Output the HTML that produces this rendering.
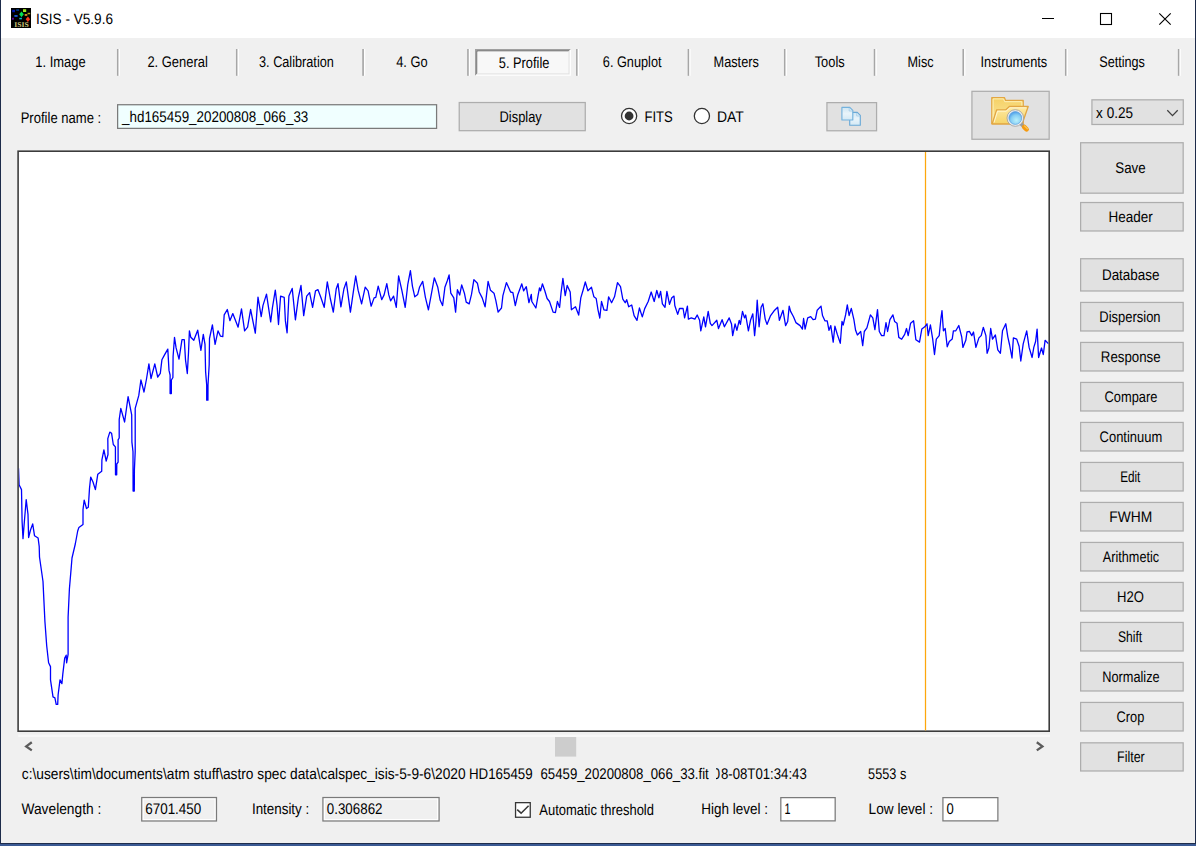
<!DOCTYPE html>
<html lang="en"><head><meta charset="utf-8"><title>ISIS - V5.9.6</title>
<style>
html,body{margin:0;padding:0;background:#f0f0f0;}
body{width:1196px;height:846px;overflow:hidden;font-family:"Liberation Sans", sans-serif;}
svg{display:block;position:absolute;left:0;top:0;}
svg text{font-family:"Liberation Sans", sans-serif;white-space:pre;text-rendering:geometricPrecision;}
</style></head>
<body>
<svg width="1196" height="846" viewBox="0 0 1196 846">
<defs>
<clipPath id="pclip"><rect x="18.9" y="152" width="1029.5" height="578.4"/></clipPath>
<clipPath id="dclip"><rect x="716.1" y="760" width="100" height="30"/></clipPath>
</defs>
<rect x="0" y="0" width="1196" height="846" fill="#f0f0f0"/>
<rect x="0" y="0" width="1196" height="38" fill="#fff"/>
<rect x="0" y="0" width="1" height="846" fill="#1d2b4a"/>
<rect x="1195" y="0" width="1" height="846" fill="#1d2b4a"/>
<rect x="0" y="843" width="1196" height="1" fill="#1f2d4c"/>
<rect x="0" y="844" width="1196" height="2" fill="#3b5a94"/>
<g transform="translate(11 8)"><rect width="20" height="20" fill="#000"/><rect x="1.2" y="1.8" width="2.8" height="2.4" fill="#0018b0"/><rect x="5.2" y="1.3" width="2.8" height="1.6" fill="#003a8a"/><rect x="12" y="1.2" width="3.2" height="2.8" fill="#9be81e"/><path d="M10.5 3.4 L12.8 6.3 L10.5 9.2 L8.2 6.3 Z" fill="#00e050"/><rect x="16.6" y="4.8" width="2.6" height="1.5" fill="#b0a818"/><rect x="13.7" y="6" width="2.6" height="1.9" fill="#d08820"/><rect x="3.4" y="7" width="3.2" height="1.9" fill="#1858d0"/><rect x="1" y="9.8" width="1.9" height="1.9" fill="#6000a0"/><rect x="8.3" y="9.8" width="2.6" height="1.5" fill="#00b8d0"/><path d="M16.9 8.6 L19.1 11.2 L16.9 14 L14.7 11.2 Z" fill="#f83818"/><text x="10.6" y="18.9" style="font-family:'Liberation Serif',serif" font-size="7.4" font-weight="bold" fill="#cfc87c" text-anchor="middle" textLength="14.5" lengthAdjust="spacingAndGlyphs">ISIS</text></g>
<path d="M1042 18.5 H1054" stroke="#000" stroke-width="1.05" fill="none"/>
<rect x="1100.5" y="13.5" width="11" height="11" stroke="#000" stroke-width="1.1" fill="none"/>
<path d="M1159.3 13.3 L1170.7 24.7 M1170.7 13.3 L1159.3 24.7" stroke="#000" stroke-width="1.15" fill="none"/>
<rect x="116.95" y="49" width="1.7" height="26.8" fill="#a6a6a6"/>
<rect x="118.65" y="49" width="1.25" height="26.8" fill="#fff"/>
<rect x="235.95" y="49" width="1.7" height="26.8" fill="#a6a6a6"/>
<rect x="237.65" y="49" width="1.25" height="26.8" fill="#fff"/>
<rect x="362.25" y="49" width="1.7" height="26.8" fill="#a6a6a6"/>
<rect x="363.95" y="49" width="1.25" height="26.8" fill="#fff"/>
<rect x="467.15" y="49" width="1.7" height="26.8" fill="#a6a6a6"/>
<rect x="468.85" y="49" width="1.25" height="26.8" fill="#fff"/>
<rect x="576.05" y="49" width="1.7" height="26.8" fill="#a6a6a6"/>
<rect x="577.75" y="49" width="1.25" height="26.8" fill="#fff"/>
<rect x="687.65" y="49" width="1.7" height="26.8" fill="#a6a6a6"/>
<rect x="689.35" y="49" width="1.25" height="26.8" fill="#fff"/>
<rect x="783.95" y="49" width="1.7" height="26.8" fill="#a6a6a6"/>
<rect x="785.65" y="49" width="1.25" height="26.8" fill="#fff"/>
<rect x="873.75" y="49" width="1.7" height="26.8" fill="#a6a6a6"/>
<rect x="875.45" y="49" width="1.25" height="26.8" fill="#fff"/>
<rect x="962.45" y="49" width="1.7" height="26.8" fill="#a6a6a6"/>
<rect x="964.15" y="49" width="1.25" height="26.8" fill="#fff"/>
<rect x="1064.95" y="49" width="1.7" height="26.8" fill="#a6a6a6"/>
<rect x="1066.65" y="49" width="1.25" height="26.8" fill="#fff"/>
<rect x="1177.85" y="49" width="1.7" height="26.8" fill="#a6a6a6"/>
<rect x="1179.55" y="49" width="1.25" height="26.8" fill="#fff"/>
<rect x="475" y="49.1" width="95.9" height="26.6" fill="#fff"/>
<path d="M475 49.1 H570.9 L569.65 50.35 H476.25 V74.45 L475 75.7 Z" fill="#a0a0a0"/>
<path d="M476.25 50.35 H569.65 L568.4 51.6 H477.5 V73.2 L476.25 74.45 Z" fill="#6b6b6b"/>
<rect x="477.5" y="51.6" width="90.9" height="21.6" fill="#f8f8f8"/>
<path d="M477.5 73.2 H568.4 V51.6 L569.65 50.35 V74.45 H476.25 Z" fill="#e3e3e3"/>
<rect x="117" y="104.1" width="320.20" height="24.90" fill="#7a7a7a"/><rect x="118.25" y="105.35" width="317.70" height="22.40" fill="#f0ffff"/>
<rect x="458.6" y="101.9" width="127.30" height="29.40" fill="#adadad"/><rect x="459.85" y="103.15" width="124.80" height="26.90" fill="#e1e1e1"/>
<circle cx="629.1" cy="116" r="7.6" fill="#fff" stroke="#333" stroke-width="1.3"/>
<circle cx="629.1" cy="116" r="4.4" fill="#333"/>
<circle cx="701.9" cy="116" r="7.6" fill="#fff" stroke="#333" stroke-width="1.3"/>
<rect x="826.3" y="102" width="50.90" height="29.40" fill="#adadad"/><rect x="827.55" y="103.25" width="48.40" height="26.90" fill="#e1e1e1"/>
<g>
<defs><linearGradient id="pg" x1="0" y1="0" x2="0" y2="1"><stop offset="0" stop-color="#cfe6f3"/><stop offset="0.5" stop-color="#e9f4fa"/><stop offset="1" stop-color="#d3e9f5"/></linearGradient></defs>
<path d="M849.7 112.4 H857.3 L860.3 115.4 V125.2 H849.7 Z" fill="url(#pg)" stroke="#6aa9d6" stroke-width="1.15" stroke-linejoin="round"/>
<path d="M856.7 112.9 V116 H859.9" fill="none" stroke="#a4cde9" stroke-width="0.8"/>
<path d="M841.9 107.4 H849.8 L852.8 110.4 V120 H841.9 Z" fill="url(#pg)" stroke="#74b2dd" stroke-width="1.15" stroke-linejoin="round"/>
<path d="M849.2 107.9 V111 H852.4" fill="none" stroke="#a4cde9" stroke-width="0.8"/>
</g>
<rect x="971.3" y="90.7" width="78.50" height="49.20" fill="#adadad"/><rect x="972.55" y="91.95" width="76.00" height="46.70" fill="#e1e1e1"/>
<g>
<defs>
<linearGradient id="fb" x1="0" y1="0" x2="0" y2="1"><stop offset="0" stop-color="#f5d064"/><stop offset="1" stop-color="#fbe8a0"/></linearGradient>
<linearGradient id="ff" x1="0" y1="0" x2="0" y2="1"><stop offset="0" stop-color="#fdeaa6"/><stop offset="1" stop-color="#f6d468"/></linearGradient>
<radialGradient id="lens" cx="0.58" cy="0.68" r="0.75"><stop offset="0" stop-color="#b9f0fb"/><stop offset="0.55" stop-color="#86cef4"/><stop offset="1" stop-color="#3c8ee6"/></radialGradient>
</defs>
<path d="M991.8 97.6 H1004.4 L1005.6 100.4 H1023.2 V123.8 H991.8 Z" fill="url(#fb)" stroke="#e2a643" stroke-width="1.3" stroke-linejoin="round"/>
<path d="M993.1 122.5 V98.9 H1003.5 L1004.7 101.7 H1021.9 V106" fill="none" stroke="#fdf0b8" stroke-width="1"/>
<path d="M992.2 123.8 L996.6 109.9 H1005.6 L1009.4 106.5 H1028.2 L1022.2 123.8 Z" fill="url(#ff)" stroke="#e2a643" stroke-width="1.3" stroke-linejoin="round"/>
<path d="M994 122.6 L997.6 111.2 H1006.1 L1009.9 107.8 H1026.4" fill="none" stroke="#fff6cf" stroke-width="1"/>
<path d="M1020.4 123.2 L1023.4 126.2" stroke="#9c9c9c" stroke-width="3.4" stroke-linecap="round"/>
<path d="M1024.2 127 L1026.6 129.4" stroke="#f59a0f" stroke-width="4.6" stroke-linecap="round"/>
<path d="M1024.6 126 L1027.4 128.8" stroke="#fbc14e" stroke-width="1.4" stroke-linecap="round"/>
<circle cx="1015.3" cy="118" r="8.3" fill="#ededed" stroke="#9d9d9d" stroke-width="0.8"/>
<circle cx="1015.3" cy="118" r="6.4" fill="url(#lens)" stroke="#5a9fe0" stroke-width="0.7"/>
</g>
<rect x="1091.3" y="99.2" width="92.60" height="25.90" fill="#adadad"/><rect x="1092.55" y="100.45" width="90.10" height="23.40" fill="#e1e1e1"/>
<path d="M1167.3 110.3 L1172.5 115.6 L1177.7 110.3" stroke="#404040" stroke-width="1.3" fill="none"/>
<rect x="1080" y="142.1" width="103.80" height="51.70" fill="#adadad"/><rect x="1081.25" y="143.35" width="101.30" height="49.20" fill="#e1e1e1"/>
<rect x="1080" y="201.9" width="103.80" height="29.70" fill="#adadad"/><rect x="1081.25" y="203.15" width="101.30" height="27.20" fill="#e1e1e1"/>
<rect x="1080" y="258.1" width="103.80" height="33.50" fill="#adadad"/><rect x="1081.25" y="259.35" width="101.30" height="31.00" fill="#e1e1e1"/>
<rect x="1080" y="301.8" width="103.80" height="29.80" fill="#adadad"/><rect x="1081.25" y="303.05" width="101.30" height="27.30" fill="#e1e1e1"/>
<rect x="1080" y="341.8" width="103.80" height="29.80" fill="#adadad"/><rect x="1081.25" y="343.05" width="101.30" height="27.30" fill="#e1e1e1"/>
<rect x="1080" y="381.8" width="103.80" height="29.80" fill="#adadad"/><rect x="1081.25" y="383.05" width="101.30" height="27.30" fill="#e1e1e1"/>
<rect x="1080" y="421.8" width="103.80" height="29.80" fill="#adadad"/><rect x="1081.25" y="423.05" width="101.30" height="27.30" fill="#e1e1e1"/>
<rect x="1080" y="461.8" width="103.80" height="29.80" fill="#adadad"/><rect x="1081.25" y="463.05" width="101.30" height="27.30" fill="#e1e1e1"/>
<rect x="1080" y="501.8" width="103.80" height="29.80" fill="#adadad"/><rect x="1081.25" y="503.05" width="101.30" height="27.30" fill="#e1e1e1"/>
<rect x="1080" y="541.8" width="103.80" height="29.80" fill="#adadad"/><rect x="1081.25" y="543.05" width="101.30" height="27.30" fill="#e1e1e1"/>
<rect x="1080" y="581.8" width="103.80" height="29.80" fill="#adadad"/><rect x="1081.25" y="583.05" width="101.30" height="27.30" fill="#e1e1e1"/>
<rect x="1080" y="621.8" width="103.80" height="29.80" fill="#adadad"/><rect x="1081.25" y="623.05" width="101.30" height="27.30" fill="#e1e1e1"/>
<rect x="1080" y="661.8" width="103.80" height="29.80" fill="#adadad"/><rect x="1081.25" y="663.05" width="101.30" height="27.30" fill="#e1e1e1"/>
<rect x="1080" y="701.8" width="103.80" height="29.80" fill="#adadad"/><rect x="1081.25" y="703.05" width="101.30" height="27.30" fill="#e1e1e1"/>
<rect x="1080" y="742.2" width="103.80" height="29.40" fill="#adadad"/><rect x="1081.25" y="743.45" width="101.30" height="26.90" fill="#e1e1e1"/>
<rect x="17.3" y="150.4" width="1032.7" height="581.6" fill="#3c3c3c"/>
<rect x="18.9" y="152" width="1029.5" height="578.4" fill="#fff"/>
<rect x="924.88" y="152" width="1.25" height="578.4" fill="#fda70c"/>
<polyline points="18.5,468.3 19.1,484.8 21.5,489.6 22.1,521.5 23.0,538.6 24.5,520 26.2,499.6 28,514.4 28.6,537.5 30.5,530 32.7,523.9 34.5,535.7 38.1,538 39.2,546.3 39.5,557 43,581.5 43.9,600.4 44.9,621.2 46.7,645.8 48.6,662.8 50.5,666.6 50.5,679.8 53,696.8 54.9,697.8 56.2,704.4 57.7,704.4 58.1,695 60,679.8 61.9,683.6 62.8,674.1 64.7,658.1 66.2,655.2 66.6,662.8 68.1,654.3 68.1,617.4 69.4,589 71,570.1 72,558 75.3,544 77.7,531 78.9,527.4 83,524.4 83,509.7 84.2,500.2 86.5,508.5 88.3,507.3 89.5,488.4 90.7,477.1 93,482 95.4,489.6 97.8,474.2 101.7,471.2 101.9,459.9 103.9,449.8 106.2,461 108,454.5 107.8,438.6 109.8,432.1 111.6,433.3 113.3,444.5 115.4,446.9 115.5,474.8 116.7,474.8 116.8,464 118.1,462.2 118.1,439.8 119.2,438 119.2,419.7 120.8,408.4 124.6,422 128.1,396.6 131.7,414.9 131.9,442.1 133.0,451.6 133.1,491 134.3,491 134.4,470 135.2,451.6 135.2,408.4 138.8,395.4 140.9,380 144,392 146.5,379 148.9,363.9 151,378.5 154.8,363.9 157.7,377 160.3,373.4 161.9,359.8 164.8,354.4 167.8,349.1 169,370.4 170.1,375 170.1,393.6 171.35,393.6 171.4,380 172.9,377.5 173.1,356.2 174.5,337.3 176.1,347.9 179,359.2 182,339.7 184.3,339.7 185.5,359.8 187.3,373.5 188.5,352.7 189.4,330.8 190.8,337.3 193.8,340.3 197.7,330.2 200.9,350.3 203.3,334.3 205,344.4 205.6,371.6 206.7,385 206.7,400.2 207.95,400.2 208,385 209.2,364.5 209.5,338.5 212.4,324.9 215.1,344.4 218,330.8 220.4,336.1 222.8,336.7 224.2,314.8 227.3,309.5 229.9,320.7 232.8,313.6 238.1,327.2 241.5,308.9 244.6,330.8 247.6,327.2 250.6,309.5 255.3,333.2 258,297.1 261.2,316.6 263,305.4 266.5,294.1 270.7,321.9 272.4,307.9 275.3,290.2 277.1,305.6 278.5,324.5 280.6,296.1 284.2,297.3 285.4,320.9 287.1,332.8 288.9,296.1 292.2,288.4 295.4,319.8 298.4,297.3 301,285.5 303.7,315.6 306.7,296.1 309.6,292.6 312.6,307.3 315.5,290.8 317.9,289.6 320.8,297.3 324.2,307.3 327.3,281.9 330.3,298.5 333.3,312.1 336.2,289 338,283.7 340.9,306.8 343.9,289 346.3,281.9 350.4,312.1 353.4,291.4 355.7,276 358.1,290.2 361.6,303.8 365.2,287.2 368.1,290.8 371.1,306.2 374.1,297.9 375.8,297.3 378.2,286.1 381.7,299.7 384.1,294.9 386.8,283.7 388.8,294.9 390.6,300.8 393.6,296.1 396.3,307.3 398.6,276 401.8,290.2 405.2,307.3 407.8,284.3 410.4,270.7 412.4,286.1 414.8,296.8 417.7,294.4 419.5,287.3 422.7,281.4 425.4,297.3 428.4,309.8 431.3,294.4 434.3,277.8 437.8,287.3 440.2,300.3 442.6,305.6 444.9,287.3 447.3,280.8 449.1,274.9 450.8,293.2 453.8,297.9 455.6,312.1 457.4,289.7 459.7,295 461.7,284.9 464.4,293.2 466.2,302.1 469.2,303.9 471.5,294.4 473.9,279.6 477.4,283.2 479.2,292 482.2,297.9 485.1,306.8 488.1,281.4 490.5,290.3 494,293.2 495.8,300.3 498.1,312.1 501.5,308 502.9,295.6 506.4,282.6 510.6,292 512.9,292.6 515.3,305.6 517.7,295 521.8,283.8 523.6,290.8 526.3,286.7 528.9,302.7 531.3,294.4 531.8,301.5 535.9,308 538.3,294.4 539.5,287.9 540.6,290.8 542.4,283.8 544.8,290.8 547.1,298.5 549.5,301.5 553.1,312.1 555.4,312.7 557.4,301.5 559.6,307.4 561,293.2 562.9,278.4 565.2,295.6 567.2,285.5 570.2,292 571.4,309.8 575.5,306.8 578.7,315.1 580.8,297.9 583.2,289.7 585.3,282 587.9,290.8 591.5,287.3 593.9,296.8 596.2,298.5 598,309.8 599.8,318 601.5,301.5 603.9,309.8 606.9,310.4 608.6,296.8 611.6,302.7 614.5,296.8 617.5,282.6 620.5,286.7 622.8,299.1 625.2,302.7 626.7,299.7 628.7,306.8 631.7,305 634.1,315.7 637,320.4 639.4,308 642.3,316.9 644.7,308.6 648.2,301.5 651.2,292 654.2,301.5 656.8,290.3 658.9,297.9 660.6,291.3 662.4,303.8 665,307.3 666.9,291.3 669.5,304.3 671.8,297.8 674,296.1 674.8,305.5 677.7,314.4 679.5,308.5 683.1,308.5 684.6,317.9 687.4,306.1 688.4,319.1 691.3,317.9 694.9,319.1 697.2,315 699.6,320.3 700.8,330.9 703.8,316.8 705.5,326.8 708.2,311.4 710.3,323.3 712,325.6 716.8,320.3 718.5,328.6 722.1,319.7 724.4,326.8 729.2,317.9 731.5,323.9 732.7,335.7 735.1,323.9 736.9,330.4 739.2,320.3 740.4,324.4 742.5,311.4 744.5,317.9 745.7,315 748.4,330.9 750.5,320.3 752.8,313.8 754.6,335.7 756,321.5 757.2,300.2 759.1,326.8 761.1,307.3 762.9,303.8 765.2,319.1 767,324.4 770.6,315.6 774.1,310.8 777.7,307.3 779.4,320.3 783,310.3 785.6,325.6 787.7,321.5 789.2,306.1 790.6,311.4 793.5,316.7 795.9,322.6 800.1,325.6 802.4,329.1 803.6,318.5 805.1,329.1 807.7,317.9 810.7,316.7 813.1,319.7 815.4,319.1 817.2,310.2 821,306.1 822.5,315.5 824.9,320.8 827.2,320.8 829,330.3 830.8,325.6 833.2,342.1 834.9,326.2 837.3,334.4 840.3,343.3 842,321.4 843.2,325 845.6,314.9 847.3,304.9 849.1,315.5 851.3,308.4 853.9,319.7 855.6,330.3 857.4,335 860.7,331.5 862.7,345.7 864.3,331.5 866.9,327.9 870.4,314.9 872.8,317.9 874.9,329.7 877.5,309.6 879.3,331.5 881.6,335.6 884,335.6 886,322.6 887.6,331.5 889.9,319.7 892.9,314.9 894.6,321.4 897,323.2 898.8,337.4 901.7,339.2 904.7,334.4 906.5,328.5 908.2,335.6 910.6,323.2 913.6,320.8 915.9,339.8 919.5,342.1 921.8,329.1 924.8,326.8 927,323.8 928.2,335.6 930.4,324.9 932.7,339.1 934.5,354.5 936.3,339.1 939.2,335.6 941,317.8 942,310.7 943.4,330.8 945.2,328.5 947.2,346.8 949.3,341.5 952.2,339.1 953.4,330.8 955.8,330.8 958.8,325.5 961.7,336.8 962.9,347.4 965.8,340.3 967,332 969.4,331.4 971.8,335.6 973.5,332 975.9,347.4 978.9,337.9 981.2,335.6 983.3,327.3 985.9,335.6 987.1,353.3 988.9,348 990.7,328.5 992.5,339.1 995.4,335 997.8,349.8 1000.4,353.3 1002.5,330.8 1005.8,323.8 1007.8,336.8 1009.6,345 1012,358 1013.4,337.9 1016.7,339.1 1019.1,346.2 1020.8,361 1023.2,343.9 1026.7,330.8 1029.1,347.4 1032.1,357.5 1033.8,347.4 1035.6,341.5 1037.1,329.1 1038.6,357.5 1041.5,348 1043.3,354.5 1045.1,340.3 1048.6,343.9" fill="none" stroke="#0000ff" stroke-width="1.3" stroke-linejoin="round" clip-path="url(#pclip)"/>
<rect x="18.2" y="734.6" width="1031.8" height="2.4" fill="#f8f8f8"/>
<rect x="555" y="737" width="21.2" height="19.6" fill="#cdcdcd"/>
<path d="M31.8 742.3 L26.2 746.4 L31.8 750.4" stroke="#5c5c5c" stroke-width="2.3" fill="none"/>
<path d="M1036.8 742.3 L1042.4 746.4 L1036.8 750.4" stroke="#5c5c5c" stroke-width="2.3" fill="none"/>
<rect x="141.1" y="796.9" width="76.00" height="24.70" fill="#7a7a7a"/><rect x="142.35" y="798.15" width="73.50" height="22.20" fill="#fff"/><rect x="143.7" y="799.5" width="70.80" height="19.50" fill="#f0f0f0"/>
<rect x="322.3" y="796.9" width="117.40" height="24.70" fill="#7a7a7a"/><rect x="323.55" y="798.15" width="114.90" height="22.20" fill="#fff"/><rect x="324.90000000000003" y="799.5" width="112.20" height="19.50" fill="#f0f0f0"/>
<rect x="780.2" y="797" width="55.60" height="24.50" fill="#7a7a7a"/><rect x="781.45" y="798.25" width="53.10" height="22.00" fill="#fff"/>
<rect x="942.3" y="797" width="56.20" height="24.50" fill="#7a7a7a"/><rect x="943.55" y="798.25" width="53.70" height="22.00" fill="#fff"/>
<rect x="514.9" y="802.0" width="16" height="15.9" fill="#363636"/>
<rect x="516.2" y="803.3" width="13.4" height="13.3" fill="#fff"/>
<path d="M517.2 809.6 L521.1 813.2 L528.6 805.8" stroke="#3a3a3a" stroke-width="1.6" fill="none"/>
<g>
<text transform="translate(35.99 23.80) scale(0.9056 1)" font-size="15" fill="#000">ISIS - V5.9.6</text>
<text transform="translate(35.26 67.30) scale(0.8401 1)" font-size="15.4" fill="#000">1. Image</text>
<text transform="translate(147.40 67.30) scale(0.8412 1)" font-size="15.4" fill="#000">2. General</text>
<text transform="translate(259.00 67.30) scale(0.8255 1)" font-size="15.4" fill="#000">3. Calibration</text>
<text transform="translate(396.20 67.30) scale(0.8360 1)" font-size="15.4" fill="#000">4. Go</text>
<text transform="translate(498.80 67.70) scale(0.8326 1)" font-size="15.4" fill="#000">5. Profile</text>
<text transform="translate(602.80 67.30) scale(0.8266 1)" font-size="15.4" fill="#000">6. Gnuplot</text>
<text transform="translate(713.57 67.30) scale(0.8272 1)" font-size="15.4" fill="#000">Masters</text>
<text transform="translate(814.70 67.30) scale(0.8335 1)" font-size="15.4" fill="#000">Tools</text>
<text transform="translate(907.58 67.30) scale(0.8211 1)" font-size="15.4" fill="#000">Misc</text>
<text transform="translate(980.57 67.30) scale(0.8293 1)" font-size="15.4" fill="#000">Instruments</text>
<text transform="translate(1099.20 67.30) scale(0.8209 1)" font-size="15.4" fill="#000">Settings</text>
<text transform="translate(20.65 123.20) scale(0.8481 1)" font-size="15.4" fill="#000">Profile name :</text>
<text transform="translate(122.07 121.90) scale(0.8702 1)" font-size="15.4" fill="#000">_hd165459_20200808_066_33</text>
<text transform="translate(499.56 122.00) scale(0.8359 1)" font-size="15.4" fill="#000">Display</text>
<text transform="translate(644.45 121.80) scale(0.8479 1)" font-size="15.4" fill="#000">FITS</text>
<text transform="translate(716.89 121.80) scale(0.9064 1)" font-size="15.4" fill="#000">DAT</text>
<text transform="translate(1096.10 118.00) scale(0.8799 1)" font-size="15.4" fill="#000">x 0.25</text>
<text transform="translate(1115.30 172.60) scale(0.8662 1)" font-size="15.4" fill="#000">Save</text>
<text transform="translate(1108.52 221.50) scale(0.8753 1)" font-size="15.4" fill="#000">Header</text>
<text transform="translate(1101.93 280.40) scale(0.8737 1)" font-size="15.4" fill="#000">Database</text>
<text transform="translate(1099.36 321.90) scale(0.8419 1)" font-size="15.4" fill="#000">Dispersion</text>
<text transform="translate(1100.84 361.80) scale(0.8621 1)" font-size="15.4" fill="#000">Response</text>
<text transform="translate(1104.50 401.80) scale(0.8352 1)" font-size="15.4" fill="#000">Compare</text>
<text transform="translate(1099.60 441.80) scale(0.8409 1)" font-size="15.4" fill="#000">Continuum</text>
<text transform="translate(1120.14 481.80) scale(0.7621 1)" font-size="15.4" fill="#000">Edit</text>
<text transform="translate(1109.30 521.80) scale(0.8970 1)" font-size="15.4" fill="#000">FWHM</text>
<text transform="translate(1102.80 561.80) scale(0.8236 1)" font-size="15.4" fill="#000">Arithmetic</text>
<text transform="translate(1117.05 601.80) scale(0.8476 1)" font-size="15.4" fill="#000">H2O</text>
<text transform="translate(1117.90 641.80) scale(0.7868 1)" font-size="15.4" fill="#000">Shift</text>
<text transform="translate(1102.27 681.80) scale(0.8285 1)" font-size="15.4" fill="#000">Normalize</text>
<text transform="translate(1116.60 721.80) scale(0.8323 1)" font-size="15.4" fill="#000">Crop</text>
<text transform="translate(1117.09 762.00) scale(0.8072 1)" font-size="15.4" fill="#000">Filter</text>
<text transform="translate(21.80 779.00) scale(0.8919 1)" font-size="15.4" fill="#000">c:\users\tim\documents\atm stuff\astro spec data\calspec_isis-5-9-6\2020</text>
<text transform="translate(468.94 779.00) scale(0.8650 1)" font-size="15.4" fill="#000">HD165459</text>
<text transform="translate(540.50 779.00) scale(0.8586 1)" font-size="15.4" fill="#000">65459_20200808_066_33.fit</text>
<text transform="translate(868.10 779.00) scale(0.8256 1)" font-size="15.4" fill="#000">5553 s</text>
<text transform="translate(21.50 814.30) scale(0.8934 1)" font-size="15.4" fill="#000">Wavelength :</text>
<text transform="translate(145.20 814.30) scale(0.8738 1)" font-size="15.4" fill="#000">6701.450</text>
<text transform="translate(251.93 814.30) scale(0.8696 1)" font-size="15.4" fill="#000">Intensity :</text>
<text transform="translate(326.80 814.30) scale(0.8675 1)" font-size="15.4" fill="#000">0.306862</text>
<text transform="translate(539.30 815.20) scale(0.8430 1)" font-size="15.4" fill="#000">Automatic threshold</text>
<text transform="translate(701.32 814.30) scale(0.8760 1)" font-size="15.4" fill="#000">High level :</text>
<text transform="translate(784.50 814.30) scale(0.7000 1)" font-size="15.4" fill="#000">1</text>
<text transform="translate(868.61 814.30) scale(0.8859 1)" font-size="15.4" fill="#000">Low level :</text>
<text transform="translate(946.50 814.30) scale(0.8500 1)" font-size="15.4" fill="#000">0</text>
<g clip-path="url(#dclip)"><text transform="translate(712.66 779.00) scale(0.8578 1)" font-size="15.4">0<tspan dx="1.05">8-08T01:34:43</tspan></text></g>
</g>
</svg>
</body></html>
